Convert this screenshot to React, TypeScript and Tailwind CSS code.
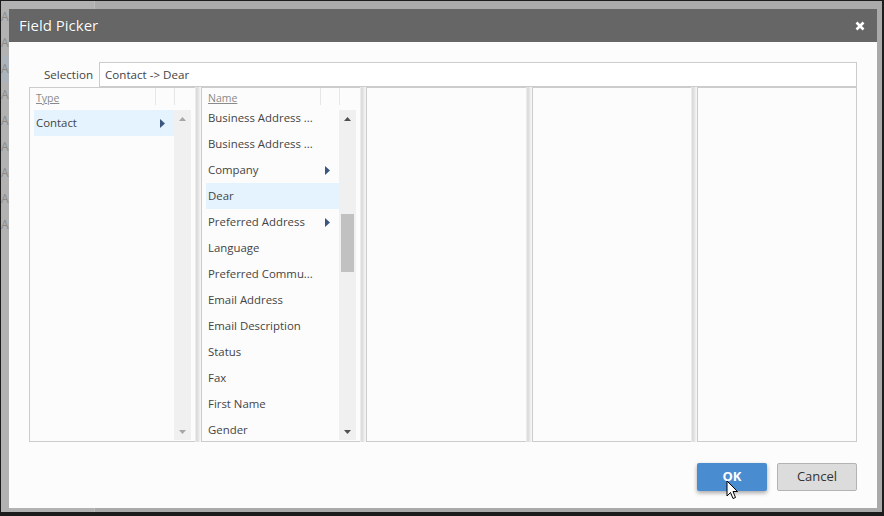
const FONT = "font-['Open_Sans','Noto_Sans',sans-serif]";

type Item = { label: string; arrow?: boolean; selected?: boolean };

const typeItems: Item[] = [{ label: "Contact", arrow: true, selected: true }];

const nameItems: Item[] = [
  { label: "Business Address ..." },
  { label: "Business Address ..." },
  { label: "Company", arrow: true },
  { label: "Dear", selected: true },
  { label: "Preferred Address", arrow: true },
  { label: "Language" },
  { label: "Preferred Commu..." },
  { label: "Email Address" },
  { label: "Email Description" },
  { label: "Status" },
  { label: "Fax" },
  { label: "First Name" },
  { label: "Gender" },
];

function Arrow() {
  return (
    <svg width="5" height="9" viewBox="0 0 5 9" className="shrink-0">
      <path d="M0 0 L5 4.5 L0 9 Z" fill="#3b5780" />
    </svg>
  );
}

function ScrollArrow({ up, color }: { up?: boolean; color: string }) {
  return (
    <div className="h-[17px] flex items-center justify-center">
      <svg width="7" height="4" viewBox="0 0 7 4">
        <path d={up ? "M0 4 L3.5 0 L7 4 Z" : "M0 0 L7 0 L3.5 4 Z"} fill={color} />
      </svg>
    </div>
  );
}

function Splitter() {
  return (
    <div className="w-[6px] h-[355px] shrink-0 bg-[linear-gradient(to_right,#f2f2f2,#d8d8d8_30%,#ececec_70%,#f8f8f8)]" />
  );
}

function Column({
  width,
  header,
  items,
  offset,
  thumb,
  last,
}: {
  width: string;
  header?: string;
  items?: Item[];
  offset: string;
  thumb?: boolean;
  last?: boolean;
}) {
  return (
    <div
      className={`${width} h-[355px] shrink-0 flex flex-col border-l border-t border-b border-[#cccccc] bg-[#fcfcfc] ${
        last ? "border-r" : ""
      }`}
    >
      {items ? (
        <>
          <div className="h-[17px] flex shrink-0">
            <div className="flex-1 pl-[6px] pt-[4px] text-[10.5px] leading-[12px] text-[#8a8a8a] underline">
              {header}
            </div>
            <div className="w-[19px] border-l border-[#e6e6e6]" />
            <div className="w-[17px] border-l border-[#e6e6e6]" />
            <div className="w-[4px]" />
          </div>
          <div className="flex-1 min-h-0 flex px-[4px] overflow-hidden">
            <div className={`flex-1 min-w-0 overflow-hidden ${offset}`}>
              {items.map((it, i) => (
                <div
                  key={i}
                  className={`h-[26px] flex items-center justify-between pl-[2px] pr-[9px] text-[11.4px] text-[#444444] whitespace-nowrap ${
                    it.selected ? "bg-[#e5f3fe]" : ""
                  }`}
                >
                  <span>{it.label}</span>
                  {it.arrow && <Arrow />}
                </div>
              ))}
            </div>
            <div className="w-[17px] mt-[5px] mb-[1px] bg-[#f0f0f0] flex flex-col">
              <ScrollArrow up color={thumb ? "#505050" : "#a6a6a6"} />
              <div className="flex-1 px-[2px] pt-[87px]">
                {thumb && <div className="h-[58px] bg-[#c1c1c1]" />}
              </div>
              <ScrollArrow color={thumb ? "#505050" : "#a6a6a6"} />
            </div>
          </div>
        </>
      ) : null}
    </div>
  );
}

export default function App() {
  const rows = Array.from({ length: 9 });
  return (
    <div
      className={`w-[884px] h-[516px] relative overflow-hidden bg-[#aaaaaa] border-t border-l border-r-[2px] border-b-[4px] border-[#1c1c1c] ${FONT}`}
    >
      {/* page behind the modal */}
      <div className="flex h-full">
        <div className="w-[94px] h-full bg-[#b2b2b2] border-r border-[#bcbcbc] pt-[3px]">
          {rows.map((_, i) => (
            <div
              key={i}
              className={`h-[26px] w-[8px] overflow-hidden flex items-center text-[12px] text-[#8c8c8c] ${
                i === 2 ? "bg-[#acb3ba] text-[#6f8aa6]" : ""
              }`}
            >
              Ac
            </div>
          ))}
        </div>
        <div className="flex-1" />
      </div>

      {/* dialog */}
      <div className="absolute left-[8px] top-[8px] w-[868px] h-[499px] flex flex-col bg-[#fcfcfc]">
        <div className="h-[33px] shrink-0 bg-[#666666] flex items-center justify-between pl-[10px] pr-[12px]">
          <span className="text-[15px] text-white [text-shadow:0_0_1px_rgba(0,0,0,0.4)]">Field Picker</span>
          <svg width="10" height="10" viewBox="0 0 10 10">
            <path d="M1.5 1.5 L8.5 8.5 M8.5 1.5 L1.5 8.5" stroke="#ffffff" strokeWidth="2.6" />
          </svg>
        </div>

        <div className="flex-1 flex flex-col px-[20px] pt-[20px]">
          <div className="flex items-center h-[25px]">
            <div className="w-[70px] pr-[6px] text-right text-[11.6px] text-[#444444]">Selection</div>
            <div className="flex-1 h-[25px] border border-[#cccccc] bg-white flex items-center pl-[5px] text-[11.6px] text-[#444444]">
              Contact -&gt; Dear
            </div>
          </div>

          <div className="flex">
            <Column width="w-[166px]" header="Type" items={typeItems} offset="pt-[5px]" />
            <Splitter />
            <Column width="w-[159px]" header="Name" items={nameItems} offset="pt-0" thumb />
            <Splitter />
            <Column width="w-[160px]" offset="" />
            <Splitter />
            <Column width="w-[159px]" offset="" />
            <Splitter />
            <Column width="w-[160px]" offset="" last />
          </div>

          <div className="flex justify-end gap-[10px] mt-[21px]">
            <button className="w-[70px] h-[28px] rounded-[2px] bg-[#4a8cd0] text-white text-[13px] font-bold shadow-[0_2px_4px_rgba(0,0,0,0.35)]">
              OK
            </button>
            <button className="w-[80px] h-[28px] rounded-[2px] bg-[#dcdcdc] border border-[#b3b3b3] text-[#333333] text-[13px]">
              Cancel
            </button>
          </div>
        </div>
      </div>

      {/* mouse pointer */}
      <svg
        className="absolute left-[725px] top-[479px]"
        width="13"
        height="20"
        viewBox="0 0 13 20"
      >
        <path
          d="M1 1 L1 16 L4.5 12.5 L7 18.5 L9.5 17.5 L7 11.5 L11.5 11.5 Z"
          fill="#ffffff"
          stroke="#000000"
          strokeWidth="1"
          strokeLinejoin="miter"
        />
      </svg>
    </div>
  );
}
